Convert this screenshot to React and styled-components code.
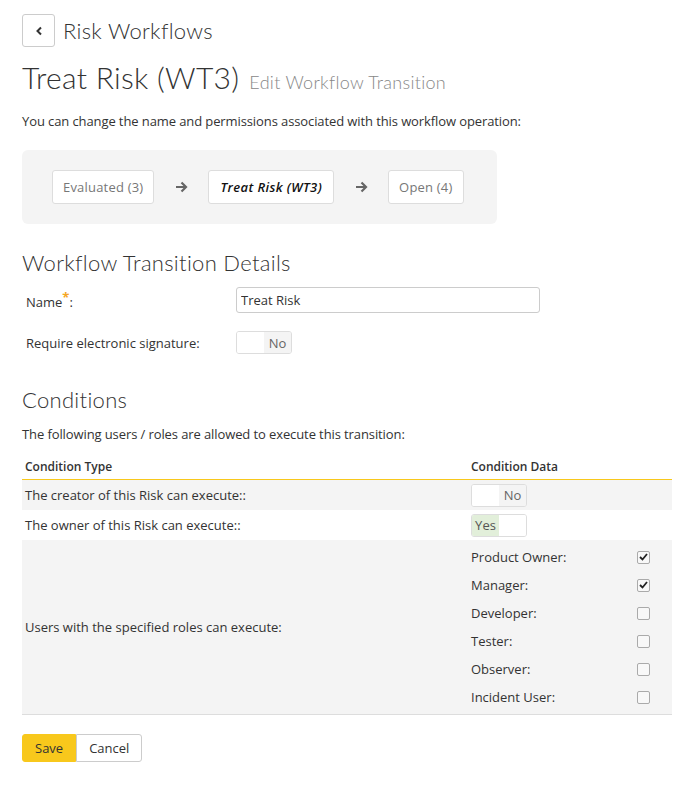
import React from 'react';
import styled, { createGlobalStyle } from 'styled-components';

const GlobalStyle = createGlobalStyle`
  body {
    margin: 0;
    background: #fff;
    font-family: 'Open Sans', 'Liberation Sans', sans-serif;
    font-size: 13px;
    color: #333;
  }
`;

const Page = styled.div`
  padding: 14px 20px 20px 22px;
`;

const TopBar = styled.div`
  display: flex;
  align-items: center;
  gap: 8px;
`;

const BackButton = styled.button`
  width: 33px;
  height: 33px;
  border: 1px solid #ccc;
  border-radius: 3px;
  background: #fff;
  display: flex;
  align-items: center;
  justify-content: center;
  padding: 0;
`;

const LightHeading = styled.div`
  font-family: Lato, 'Open Sans', sans-serif;
  font-weight: 300;
  color: ${(p) => p.color || '#333'};
  font-size: ${(p) => p.size}px;
  letter-spacing: 0.3px;
`;

const TitleRow = styled.div`
  display: flex;
  align-items: baseline;
  gap: 10px;
  margin-top: 12px;
`;

const Intro = styled.p`
  margin: ${(p) => p.mt}px 0 0;
  font-size: 13px;
  letter-spacing: -0.1px;
`;

const FlowBox = styled.div`
  margin-top: 20px;
  width: 475px;
  height: 74px;
  box-sizing: border-box;
  background: #f4f4f4;
  border-radius: 6px;
  display: flex;
  align-items: center;
  padding-left: 30px;
`;

const Pill = styled.div`
  height: 34px;
  box-sizing: border-box;
  padding: 0 ${(p) => (p.current ? 11 : 10)}px;
  border: 1px solid #ddd;
  border-radius: 3px;
  background: #fff;
  display: flex;
  align-items: center;
  font-size: 13px;
  color: ${(p) => (p.current ? '#111' : '#777')};
  font-style: ${(p) => (p.current ? 'italic' : 'normal')};
  font-weight: ${(p) => (p.current ? 600 : 400)};
  letter-spacing: ${(p) => (p.current ? '0.4px' : '0.2px')};
`;

const Arrow = styled.div`
  width: 54px;
  display: flex;
  justify-content: center;
  color: #666;
`;

const SectionHeading = styled(LightHeading)`
  margin-top: ${(p) => p.mt}px;
`;

const FormRow = styled.div`
  display: grid;
  grid-template-columns: 210px 304px;
  align-items: center;
  margin-top: ${(p) => p.mt}px;
  padding-left: 4px;
`;

const Label = styled.label`
  font-size: 13px;
  color: #333;
`;

const Star = styled.sup`
  color: #f5a623;
  font-size: 13px;
  font-weight: 700;
`;

const TextInput = styled.input`
  height: 26px;
  box-sizing: border-box;
  border: 1px solid #ccc;
  border-radius: 3px;
  padding: 0 4px;
  font-family: inherit;
  font-size: 13px;
  color: #333;
`;

const ToggleBox = styled.div`
  width: 56px;
  height: 23px;
  box-sizing: border-box;
  border: 1px solid #ddd;
  border-radius: 3px;
  display: flex;
  overflow: hidden;
  background: #fff;
  font-size: 13px;
`;

const ToggleHalf = styled.span`
  flex: 1;
  display: flex;
  align-items: center;
  justify-content: center;
  color: ${(p) => (p.on ? '#555' : '#666')};
  background: ${(p) => (p.on ? '#e2efda' : p.active ? '#f4f4f4' : '#fff')};
`;

const Toggle = ({ value }) => (
  <ToggleBox>
    {value ? (
      <>
        <ToggleHalf on>Yes</ToggleHalf>
        <ToggleHalf />
      </>
    ) : (
      <>
        <ToggleHalf />
        <ToggleHalf active>No</ToggleHalf>
      </>
    )}
  </ToggleBox>
);

const Table = styled.table`
  margin-top: 15px;
  width: 650px;
  border-collapse: collapse;
  font-size: 13px;
`;

const Th = styled.th`
  text-align: left;
  font-weight: 600;
  padding: 0 3px 4px;
  border-bottom: 1px solid #f8c81c;
  font-size: 12px;
  color: #333;
`;

const Tr = styled.tr`
  background: ${(p) => (p.shaded ? '#f4f4f4' : '#fff')};
  border-bottom: ${(p) => (p.last ? '1px solid #ddd' : 'none')};
`;

const Td = styled.td`
  padding: 3px 3px;
  vertical-align: middle;
  height: 24px;
`;

const RoleList = styled.div`
  display: flex;
  flex-direction: column;
`;

const RoleRow = styled.div`
  display: flex;
  justify-content: space-between;
  align-items: center;
  height: 28px;
  padding-right: 19px;
`;

const Check = styled.span`
  width: 11px;
  height: 11px;
  border: 1px solid #aaa;
  border-radius: 2px;
  background: #f8f8f8;
  display: flex;
  align-items: center;
  justify-content: center;
`;

const Buttons = styled.div`
  display: flex;
  margin-top: 19px;
`;

const Btn = styled.button`
  height: 28px;
  padding: 0 12px;
  font-family: inherit;
  font-size: 13px;
  color: #333;
  border: 1px solid ${(p) => (p.primary ? '#f8c81c' : '#ccc')};
  background: ${(p) => (p.primary ? '#f8c81c' : '#fff')};
  border-radius: ${(p) => (p.primary ? '3px 0 0 3px' : '0 3px 3px 0')};
`;

const ArrowIcon = () => (
  <svg width="13" height="12" viewBox="0 0 13 12">
    <path d="M1 6h10M6.5 1.5L11 6l-4.5 4.5" stroke="#666" strokeWidth="2.2" fill="none" />
  </svg>
);

const roles = [
  ['Product Owner:', true],
  ['Manager:', true],
  ['Developer:', false],
  ['Tester:', false],
  ['Observer:', false],
  ['Incident User:', false],
];

const App = () => (
  <Page>
    <GlobalStyle />
    <TopBar>
      <BackButton>
        <svg width="8" height="10" viewBox="0 0 8 10">
          <path d="M6 1.5L2.5 5 6 8.5" stroke="#333" strokeWidth="2" fill="none" />
        </svg>
      </BackButton>
      <LightHeading size={22}>Risk Workflows</LightHeading>
    </TopBar>
    <TitleRow>
      <LightHeading size={30}>Treat Risk (WT3)</LightHeading>
      <LightHeading size={18} color="#888">Edit Workflow Transition</LightHeading>
    </TitleRow>
    <Intro mt={17}>You can change the name and permissions associated with this workflow operation:</Intro>
    <FlowBox>
      <Pill>Evaluated (3)</Pill>
      <Arrow><ArrowIcon /></Arrow>
      <Pill current>Treat Risk (WT3)</Pill>
      <Arrow><ArrowIcon /></Arrow>
      <Pill>Open (4)</Pill>
    </FlowBox>
    <SectionHeading size={22} mt={25}>Workflow Transition Details</SectionHeading>
    <FormRow mt={11}>
      <Label>
        Name<Star>*</Star>:
      </Label>
      <TextInput defaultValue="Treat Risk" />
    </FormRow>
    <FormRow mt={18}>
      <Label>Require electronic signature:</Label>
      <Toggle value={false} />
    </FormRow>
    <SectionHeading size={22} mt={32}>Conditions</SectionHeading>
    <Intro mt={12}>The following users / roles are allowed to execute this transition:</Intro>
    <Table>
      <thead>
        <tr>
          <Th style={{ width: 440 }}>Condition Type</Th>
          <Th>Condition Data</Th>
        </tr>
      </thead>
      <tbody>
        <Tr shaded>
          <Td>The creator of this Risk can execute::</Td>
          <Td><Toggle value={false} /></Td>
        </Tr>
        <Tr>
          <Td>The owner of this Risk can execute::</Td>
          <Td><Toggle value /></Td>
        </Tr>
        <Tr shaded last>
          <Td>Users with the specified roles can execute:</Td>
          <Td>
            <RoleList>
              {roles.map(([name, checked]) => (
                <RoleRow key={name}>
                  <span>{name}</span>
                  <Check>
                    {checked && (
                      <svg width="9" height="8" viewBox="0 0 9 8">
                        <path d="M1 4l2.5 2.5L8 1" stroke="#222" strokeWidth="1.8" fill="none" />
                      </svg>
                    )}
                  </Check>
                </RoleRow>
              ))}
            </RoleList>
          </Td>
        </Tr>
      </tbody>
    </Table>
    <Buttons>
      <Btn primary>Save</Btn>
      <Btn>Cancel</Btn>
    </Buttons>
  </Page>
);

export default App;
